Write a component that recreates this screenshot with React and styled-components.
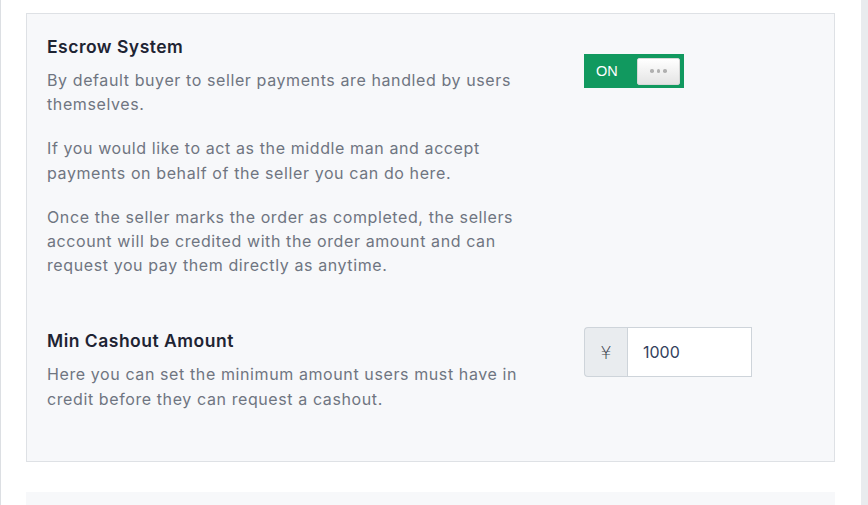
import React from 'react';
import styled, { createGlobalStyle } from 'styled-components';

const GlobalStyle = createGlobalStyle`
  html, body {
    margin: 0;
    padding: 0;
    background: #ffffff;
    font-family: 'Inter', 'Noto Sans', sans-serif;
  }
`;

const Page = styled.div`
  display: flex;
  height: 505px;
  overflow: hidden;
`;

const Main = styled.div`
  flex: 1;
  border-left: 1px solid #dcdfe3;
  padding: 13px 26px 0 25px;
  display: flex;
  flex-direction: column;
  gap: 30px;
`;

const Rail = styled.div`
  width: 7px;
  background: #e9ebee;
`;

const Panel = styled.section`
  background: #f7f8fa;
  border: 1px solid ${({ $bare }) => ($bare ? '#f7f8fa' : '#dee1e5')};
  padding: 22px 20px 50px 20px;
  display: flex;
  flex-direction: column;
  gap: 53px;
  min-height: ${({ $bare }) => ($bare ? '60px' : 'auto')};
`;

const Row = styled.div`
  display: flex;
  align-items: flex-start;
`;

const Info = styled.div`
  width: 500px;
  flex-shrink: 0;
`;

const Control = styled.div`
  padding-left: 37px;
  padding-top: ${({ $top }) => $top || 0}px;
  margin-top: ${({ $lift }) => ($lift ? -$lift : 0)}px;
`;

const Title = styled.h3`
  margin: 0 0 ${({ $gap }) => $gap || 11}px;
  font-size: 17.5px;
  font-weight: 600;
  color: #1e2433;
  letter-spacing: 0.5px;
`;

const Text = styled.p`
  margin: 0 0 20px;
  font-size: 16px;
  line-height: 24.2px;
  color: #6f7581;
  letter-spacing: 0.6px;
  max-width: 484px;

  &:last-child {
    margin-bottom: 0;
  }
`;

const Toggle = styled.div`
  width: 100px;
  height: 34px;
  background: #11995f;
  display: flex;
  align-items: center;
  justify-content: space-between;
  padding: 0 4px 0 12px;
  box-sizing: border-box;
`;

const ToggleLabel = styled.span`
  color: #ffffff;
  font-size: 14.5px;
  font-family: 'Liberation Sans', Arial, sans-serif;
`;

const Knob = styled.div`
  width: 43px;
  height: 27px;
  border-radius: 2px;
  background: linear-gradient(#ffffff, #e4e4e4);
  border: 1px solid #d8d8d8;
  box-sizing: border-box;
  display: flex;
  align-items: center;
  justify-content: center;
  gap: 3px;
`;

const Dot = styled.span`
  width: 3.5px;
  height: 3.5px;
  border-radius: 50%;
  background: #b0b0b0;
`;

const InputGroup = styled.div`
  display: flex;
  height: 50px;
`;

const Addon = styled.span`
  width: 43px;
  display: flex;
  align-items: center;
  justify-content: center;
  background: #e9ecef;
  border: 1px solid #ced4da;
  border-right: none;
  border-radius: 4px 0 0 4px;
  color: #3f4650;
  font-size: 18px;
  font-family: 'DejaVu Sans', sans-serif;
  font-weight: 300;
  box-sizing: border-box;
`;

const Input = styled.input`
  width: 125px;
  height: 50px;
  box-sizing: border-box;
  border: 1px solid #ced4da;
  padding: 0 15px;
  font-family: 'Inter', 'Noto Sans', sans-serif;
  font-size: 16px;
  color: #33415c;
  background: #ffffff;
  outline: none;
`;

export default function App() {
  return (
    <>
      <GlobalStyle />
      <Page>
        <Main>
          <Panel>
            <Row>
              <Info>
                <Title $gap={11}>Escrow System</Title>
                <Text>By default buyer to seller payments are handled by users themselves.</Text>
                <Text>If you would like to act as the middle man and accept payments on behalf of the seller you can do here.</Text>
                <Text>Once the seller marks the order as completed, the sellers account will be credited with the order amount and can request you pay them directly as anytime.</Text>
              </Info>
              <Control $top={18}>
                <Toggle>
                  <ToggleLabel>ON</ToggleLabel>
                  <Knob>
                    <Dot />
                    <Dot />
                    <Dot />
                  </Knob>
                </Toggle>
              </Control>
            </Row>
            <Row>
              <Info>
                <Title $gap={11}>Min Cashout Amount</Title>
                <Text>Here you can set the minimum amount users must have in credit before they can request a cashout.</Text>
              </Info>
              <Control $lift={3}>
                <InputGroup>
                  <Addon>¥</Addon>
                  <Input defaultValue="1000" />
                </InputGroup>
              </Control>
            </Row>
          </Panel>
          <Panel $bare />
        </Main>
        <Rail />
      </Page>
    </>
  );
}
